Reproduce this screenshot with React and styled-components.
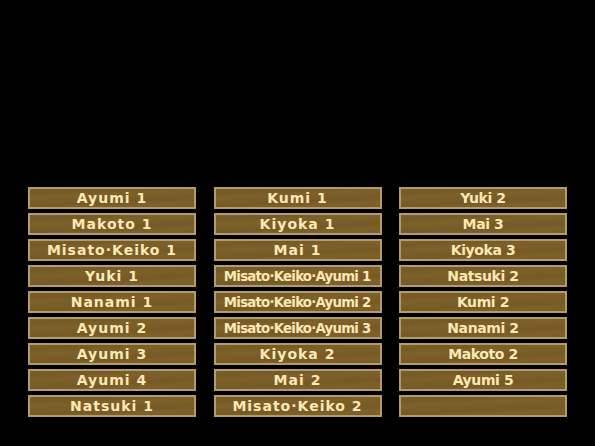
import React from 'react';
import styled, { createGlobalStyle } from 'styled-components';

const GlobalStyle = createGlobalStyle`
  html, body {
    margin: 0;
    padding: 0;
    background: #000;
  }
  body {
    font-family: "DejaVu Sans", "Liberation Sans", sans-serif;
  }
`;

const Screen = styled.div`
  width: 595px;
  height: 446px;
  background: #000;
  box-sizing: border-box;
  padding: 187px 28px 0 28px;
  display: grid;
  grid-template-columns: repeat(3, 168px);
  column-gap: 17.5px;
`;

const Column = styled.div`
  display: flex;
  flex-direction: column;
  gap: 4px;
`;

// wooden plank: light tan frame, brown grain inside
const Plank = styled.div`
  height: 22px;
  box-sizing: border-box;
  border: 2px solid #b29c6b;
  background-color: #7a5d27;
  background-image:
    repeating-linear-gradient(
      177deg,
      rgba(0, 0, 0, 0) 0px,
      rgba(0, 0, 0, 0.035) 4px,
      rgba(255, 225, 160, 0.025) 9px,
      rgba(0, 0, 0, 0) 13px
    );
  display: flex;
  align-items: center;
  justify-content: center;
  overflow: hidden;
`;

const Label = styled.span`
  color: #fce9b3;
  font-size: 14px;
  font-weight: bold;
  letter-spacing: ${(p) => p.$spacing}px;
  white-space: nowrap;
  line-height: 1;
  transform: scaleX(${(p) => p.$squeeze});
`;

const columns = [
  {
    squeeze: 1,
    spacing: 1,
    items: [
      'Ayumi 1',
      'Makoto 1',
      'Misato·Keiko 1',
      'Yuki 1',
      'Nanami 1',
      'Ayumi 2',
      'Ayumi 3',
      'Ayumi 4',
      'Natsuki 1',
    ],
  },
  {
    squeeze: 1,
    spacing: 1,
    items: [
      'Kumi 1',
      'Kiyoka 1',
      'Mai 1',
      'Misato·Keiko·Ayumi 1',
      'Misato·Keiko·Ayumi 2',
      'Misato·Keiko·Ayumi 3',
      'Kiyoka 2',
      'Mai 2',
      'Misato·Keiko 2',
    ],
  },
  {
    squeeze: 1,
    spacing: -0.4,
    items: [
      'Yuki 2',
      'Mai 3',
      'Kiyoka 3',
      'Natsuki 2',
      'Kumi 2',
      'Nanami 2',
      'Makoto 2',
      'Ayumi 5',
      '',
    ],
  },
];

function fit(text, col) {
  if (text.length > 16) return { squeeze: 0.95, spacing: -0.8 };
  return { squeeze: col.squeeze, spacing: col.spacing };
}

export default function App() {
  return (
    <>
      <GlobalStyle />
      <Screen>
        {columns.map((col, i) => (
          <Column key={i}>
            {col.items.map((text, j) => {
              const f = fit(text, col);
              return (
                <Plank key={j}>
                  <Label $squeeze={f.squeeze} $spacing={f.spacing}>
                    {text}
                  </Label>
                </Plank>
              );
            })}
          </Column>
        ))}
      </Screen>
    </>
  );
}
